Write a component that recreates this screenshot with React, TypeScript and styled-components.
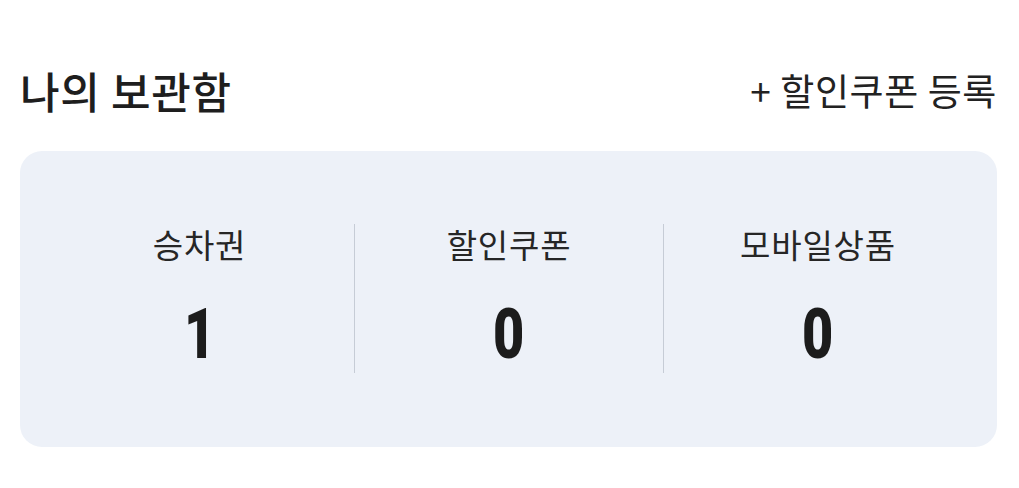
import React from 'react'
import styled, { createGlobalStyle } from 'styled-components'

const GlobalStyle = createGlobalStyle`
  html, body {
    margin: 0;
    padding: 0;
    background: #fff;
  }
  body {
    font-family: 'Noto Sans CJK KR', 'Noto Sans', sans-serif;
    color: #222;
  }
`

const Wrapper = styled.section`
  width: 1019px;
  box-sizing: border-box;
  padding: 62px 22px 0 20px;
`
const Header = styled.div`
  display: flex;
  align-items: center;
  justify-content: space-between;
  height: 56px;
`
const Title = styled.h2`
  margin: 0;
  font-size: 43px;
  font-weight: 500;
  letter-spacing: 0.7px;
  line-height: 56px;
  color: #1e1e1e;
`
const RegisterButton = styled.button.attrs({ type: 'button' })`
  margin: 0;
  padding: 0;
  border: none;
  background: none;
  font-family: inherit;
  font-size: 37px;
  font-weight: 400;
  letter-spacing: 0.6px;
  line-height: 56px;
  color: #222;
  cursor: pointer;
`
const Box = styled.ul`
  display: grid;
  grid-template-columns: repeat(3, 1fr);
  margin: 33px 0 0 0;
  padding: 73px 25px 74px;
  list-style: none;
  background: #edf1f8;
  border-radius: 22px;
`
const Item = styled.li<{ first?: boolean }>`
  display: flex;
  flex-direction: column;
  align-items: center;
  height: 149px;
  border-left: ${({ first }) => (first ? 'none' : '1px solid #c6ccd6')};
`
const Label = styled.span`
  margin-top: 2px;
  font-size: 33px;
  font-weight: 400;
  letter-spacing: 0.8px;
  line-height: 36px;
  color: #262626;
`
const Count = styled.strong`
  margin-top: 42px;
  font-family: Roboto, 'Liberation Sans', sans-serif;
  font-size: 71px;
  font-weight: 900;
  line-height: 60px;
  color: #1c1c1c;
  transform: scaleX(0.76);
`

const items = [
  { label: '승차권', count: 1 },
  { label: '할인쿠폰', count: 0 },
  { label: '모바일상품', count: 0 },
]

export default function App() {
  return (
    <>
      <GlobalStyle />
      <Wrapper>
        <Header>
          <Title>나의 보관함</Title>
          <RegisterButton>+ 할인쿠폰 등록</RegisterButton>
        </Header>
        <Box>
          {items.map((item, i) => (
            <Item key={item.label} first={i === 0}>
              <Label>{item.label}</Label>
              <Count>{item.count}</Count>
            </Item>
          ))}
        </Box>
      </Wrapper>
    </>
  )
}
